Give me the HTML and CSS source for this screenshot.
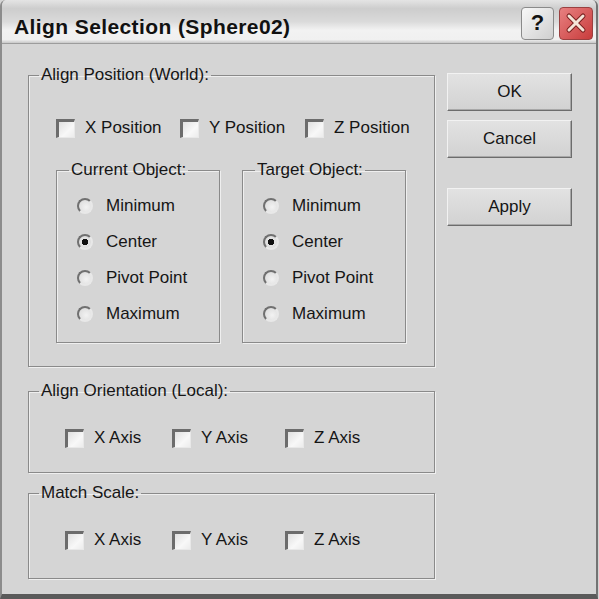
FILE: index.html
```html
<!DOCTYPE html>
<html lang="en">
<head>
    <meta charset="UTF-8">
    <meta name="viewport" content="width=device-width, initial-scale=1.0">
    <title>Align Selection</title>
    <link rel="stylesheet" href="styles.css">
</head>
<body>
    <div class="window">
        <div class="titlebar">
            <span class="title">Align Selection (Sphere02)</span>
            <div class="title-buttons">
                <button class="tb tb-help">?</button>
                <button class="tb tb-close">
                    <svg width="22" height="22" viewBox="0 0 22 22">
                        <path d="M4 4 L18 18 M18 4 L4 18" stroke="#7a2020" stroke-width="5" stroke-linecap="round"/>
                        <path d="M4 4 L18 18 M18 4 L4 18" stroke="#f4e4d8" stroke-width="3" stroke-linecap="round"/>
                    </svg>
                </button>
            </div>
        </div>

        <div class="content">
            <div class="groups">
                <fieldset class="group group-pos">
                    <legend>Align Position (World):</legend>
                    <div class="checks checks-pos">
                        <label class="check"><input type="checkbox">X Position</label>
                        <label class="check"><input type="checkbox">Y Position</label>
                        <label class="check"><input type="checkbox">Z Position</label>
                    </div>
                    <div class="objects">
                        <fieldset class="sub">
                            <legend>Current Object:</legend>
                            <div class="radios">
                                <label class="radio"><input type="radio" name="cur">Minimum</label>
                                <label class="radio"><input type="radio" name="cur" checked>Center</label>
                                <label class="radio"><input type="radio" name="cur">Pivot Point</label>
                                <label class="radio"><input type="radio" name="cur">Maximum</label>
                            </div>
                        </fieldset>
                        <fieldset class="sub">
                            <legend>Target Object:</legend>
                            <div class="radios">
                                <label class="radio"><input type="radio" name="tgt">Minimum</label>
                                <label class="radio"><input type="radio" name="tgt" checked>Center</label>
                                <label class="radio"><input type="radio" name="tgt">Pivot Point</label>
                                <label class="radio"><input type="radio" name="tgt">Maximum</label>
                            </div>
                        </fieldset>
                    </div>
                </fieldset>

                <fieldset class="group group-orient">
                    <legend>Align Orientation (Local):</legend>
                    <div class="checks checks-axis">
                        <label class="check"><input type="checkbox">X Axis</label>
                        <label class="check"><input type="checkbox">Y Axis</label>
                        <label class="check"><input type="checkbox">Z Axis</label>
                    </div>
                </fieldset>

                <fieldset class="group group-scale">
                    <legend>Match Scale:</legend>
                    <div class="checks checks-axis">
                        <label class="check"><input type="checkbox">X Axis</label>
                        <label class="check"><input type="checkbox">Y Axis</label>
                        <label class="check"><input type="checkbox">Z Axis</label>
                    </div>
                </fieldset>
            </div>

            <div class="actions">
                <button class="btn">OK</button>
                <button class="btn">Cancel</button>
                <button class="btn btn-apply">Apply</button>
            </div>
        </div>
    </div>
</body>
</html>
```

FILE: styles.css
```css
body {
    margin: 0;
    background-color: #d5d5d5;
    font-family: "Liberation Sans", Arial, sans-serif;
    font-size: 17px;
    color: #151515;
}
.window {
    width: 598px;
    height: 599px;
    box-sizing: border-box;
    border-left: 2px solid #8c8c8c;
    border-right: 2px solid #737373;
    border-bottom: 5px solid #5a5a5a;
    border-radius: 6px 6px 0 0;
    background-color: #d5d5d5;
    overflow: hidden;
}
.titlebar {
    height: 43px;
    display: flex;
    align-items: center;
    justify-content: space-between;
    padding: 0 3px 0 12px;
    border-bottom: 1px solid #9c9c9c;
    background: linear-gradient(#e4e4e4 0%, #cdcdcd 20%, #dadada 50%, #f2f2f2 70%, #f0f0f0 92%, #c8c8c8 100%);
}
.title {
    font-weight: bold;
    font-size: 21px;
    letter-spacing: 0.4px;
    color: #111;
    padding-top: 10px;
}
.title-buttons {
    display: flex;
    gap: 5px;
    padding-top: 3px;
}
.tb {
    width: 33px;
    height: 33px;
    padding: 0;
    border: 1px solid #8a8a8a;
    border-radius: 4px;
    display: flex;
    align-items: center;
    justify-content: center;
}
.tb-help {
    background: linear-gradient(135deg, #f8f8f8, #cfcfcf);
    font-family: "Liberation Sans", Arial, sans-serif;
    font-weight: bold;
    font-size: 22px;
    color: #111;
}
.tb-close {
    width: 34px;
    background: linear-gradient(135deg, #e88080, #c83c3c);
    border-color: #9a4040;
}

.content {
    display: flex;
    align-items: flex-start;
    padding: 21px 0 0 26px;
}
.groups {
    width: 407px;
}
fieldset {
    margin: 0;
    padding: 0;
    border: 1px solid #8a8a8a;
    box-shadow: 1px 1px 0 #efefef, inset 1px 1px 0 #efefef;
}
legend {
    margin-left: 10px;
    padding: 0 2px;
    line-height: 20px;
}
.group {
    width: 407px;
    box-sizing: border-box;
}
.group-pos {
    padding-bottom: 23px;
}
.group-orient {
    margin-top: 14px;
    padding-bottom: 24px;
}
.group-scale {
    margin-top: 10px;
    padding-bottom: 28px;
}
.checks {
    display: grid;
    align-items: center;
}
.checks-pos {
    padding: 33px 0 0 27px;
    grid-template-columns: 124px 125px auto;
}
.checks-axis {
    padding: 27px 0 0 36px;
    grid-template-columns: 107px 113px auto;
}
.check, .radio {
    display: flex;
    align-items: center;
    height: 20px;
    white-space: nowrap;
}
.check input {
    appearance: none;
    width: 19px;
    height: 19px;
    margin: 0 10px 0 0;
    box-sizing: border-box;
    border-top: 3px solid #6c6c6c;
    border-left: 3px solid #6c6c6c;
    border-right: 1px solid #e8e8e8;
    border-bottom: 1px solid #e8e8e8;
    background: linear-gradient(135deg, #e0e0e0, #f8f8f8 60%, #ececec);
}

.objects {
    display: flex;
    gap: 22px;
    margin-top: 22px;
    padding-left: 27px;
}
.sub {
    width: 164px;
    box-sizing: border-box;
}
.sub legend {
    margin-left: 12px;
}
.radios {
    display: flex;
    flex-direction: column;
    gap: 14px;
    padding: 15px 0 17px 20px;
}
.radio {
    height: 22px;
}
.radio input {
    appearance: none;
    width: 16px;
    height: 16px;
    margin: 0 13px 0 0;
    box-sizing: border-box;
    border-radius: 50%;
    border: 2px solid;
    border-color: #707070 #e8e8e8 #e8e8e8 #707070;
    background: radial-gradient(circle at 60% 60%, #f2f2f2, #d8d8d8);
}
.radio input:checked {
    background: radial-gradient(circle, #111 0, #111 3px, #e4e4e4 3.5px, #d8d8d8);
}

.actions {
    display: flex;
    flex-direction: column;
    margin-left: 12px;
    padding-top: 8px;
}
.btn {
    width: 125px;
    height: 38px;
    margin-bottom: 9px;
    font-family: "Liberation Sans", Arial, sans-serif;
    font-size: 17px;
    color: #151515;
    border: 1px solid;
    border-color: #f2f2f2 #6c6c6c #6c6c6c #f2f2f2;
    box-shadow: inset -1px -1px 0 #a8a8a8;
    background: linear-gradient(#e2e2e2, #d2d2d2);
}
.btn-apply {
    margin-top: 21px;
}
```
